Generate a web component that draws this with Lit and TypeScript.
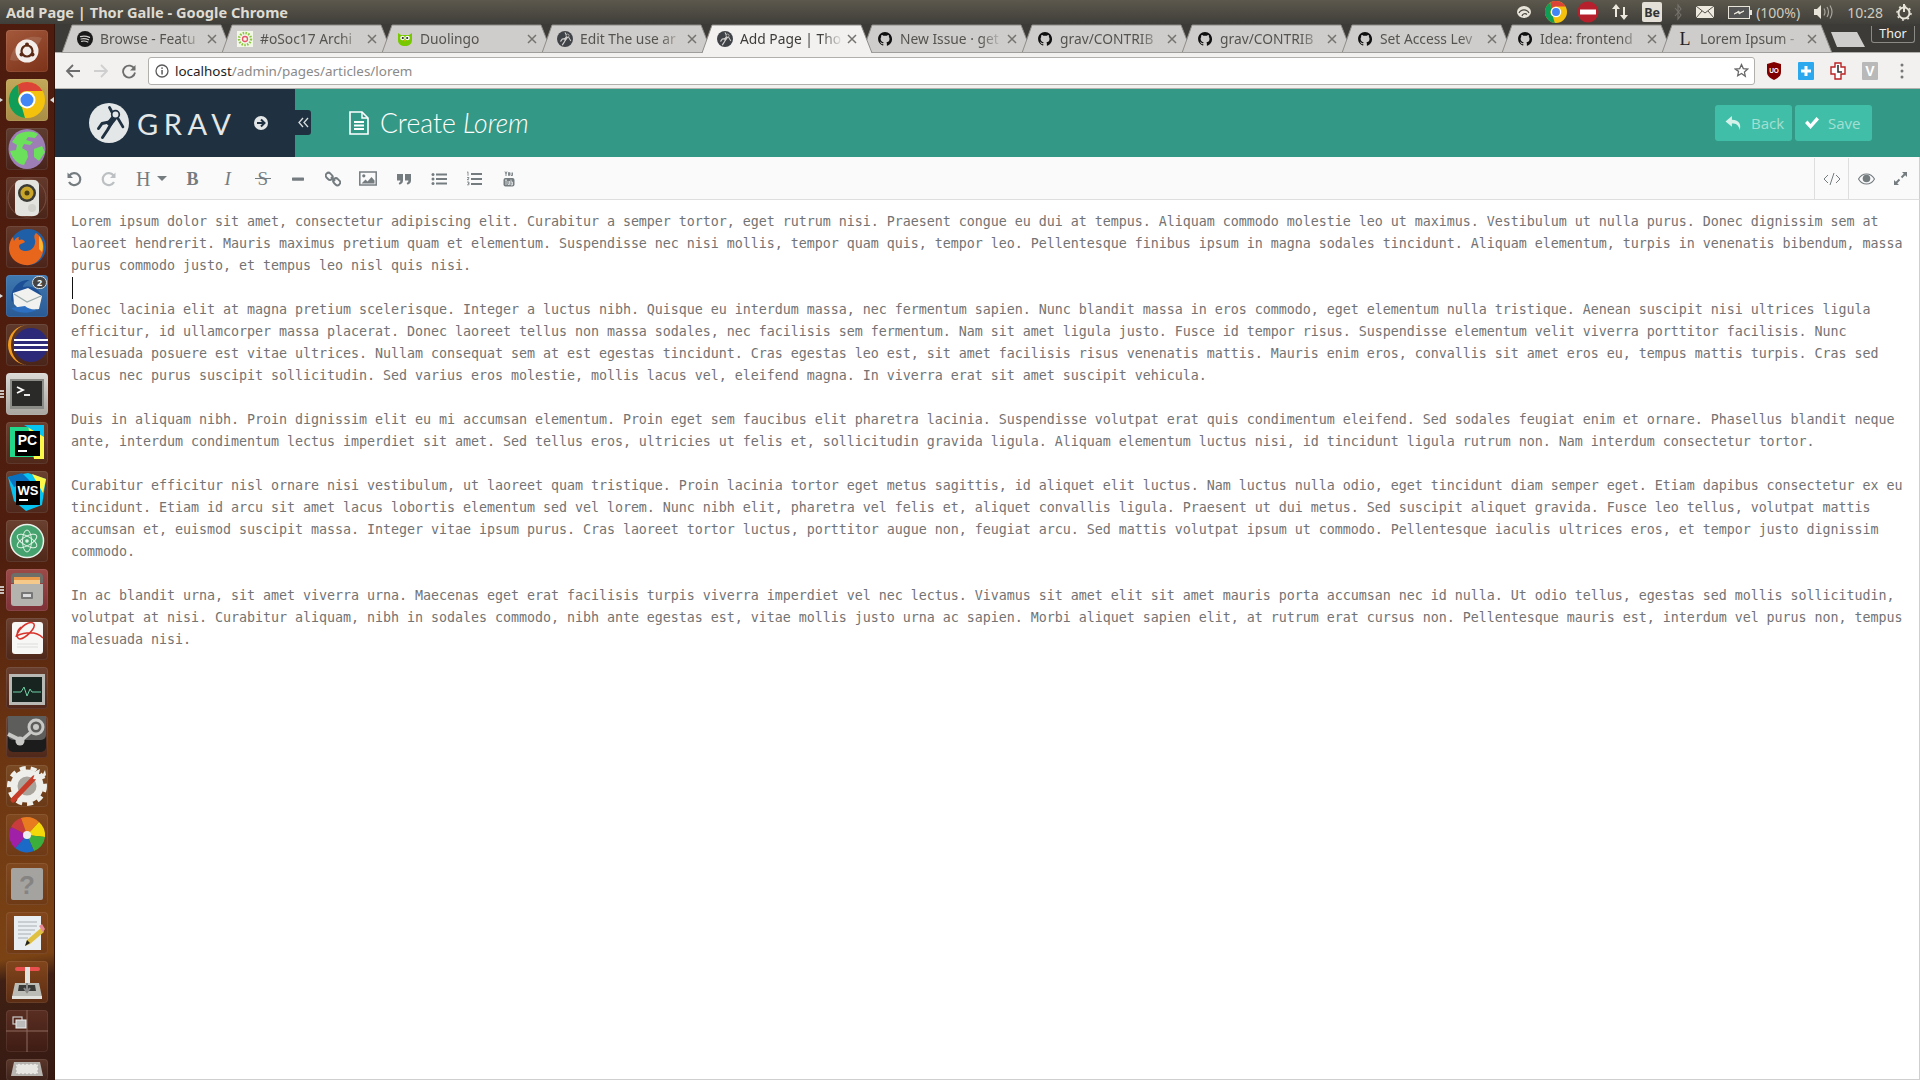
import { LitElement, html, css, svg } from "lit";
import { customElement } from "lit/decorators.js";

const GH = "M12 1.6C6.2 1.6 1.6 6.2 1.6 12c0 4.6 3 8.5 7.1 9.9.5.1.7-.2.7-.5v-1.8c-2.9.6-3.5-1.2-3.5-1.2-.5-1.2-1.2-1.5-1.2-1.5-.9-.6.1-.6.1-.6 1 .1 1.6 1.1 1.6 1.1.9 1.6 2.4 1.1 3 .9.1-.7.4-1.1.7-1.4-2.3-.3-4.7-1.2-4.7-5.1 0-1.1.4-2 1.1-2.8-.1-.3-.5-1.3.1-2.8 0 0 .9-.3 2.9 1.1a10 10 0 0 1 5.2 0c2-1.4 2.9-1.1 2.9-1.1.6 1.5.2 2.5.1 2.8.7.7 1.1 1.7 1.1 2.8 0 4-2.4 4.8-4.7 5.1.4.3.7 1 .7 1.9v2.8c0 .3.2.6.7.5 4.1-1.4 7.1-5.3 7.1-9.9C22.4 6.2 17.8 1.6 12 1.6z";

const gravMark = (size: number, bg: string, fg: string) => html`<svg width=${size} height=${size} viewBox="0 0 40 40">
  <circle cx="20" cy="20" r="20" fill=${bg}></circle>
  <g fill="none" stroke=${fg} stroke-linecap="round" stroke-linejoin="round">
    <path d="M24 11L20.500 4.500" stroke-width="2.800"></path>
    <path d="M29 15.500L34 24" stroke-width="2.600"></path>
    <path d="M25 15l-4 5" stroke-width="6"></path>
    <path d="M20 19l-7 1.500L9.500 25.500" stroke-width="3"></path>
    <path d="M22 21l-3.500 6L13.500 34.500" stroke-width="3"></path>
  </g>
  <circle cx="26.500" cy="11.500" r="3.800" fill=${bg} stroke=${fg} stroke-width="1.700"></circle>
</svg>`;

const fav: Record<string, any> = {
  spotify: html`<svg width="16" height="16" viewBox="0 0 16 16"><circle cx="8" cy="8" r="8" fill="#1a1a1a"></circle><path d="M3.500 5.600c3-.8 6-.6 9 .8M4 8c2.600-.6 5-.4 7.600.8M4.600 10.300c2-.5 4.200-.3 6.200.7" stroke="#cfcdcb" stroke-width="1.200" fill="none" stroke-linecap="round"></path></svg>`,
  osoc: html`<svg width="16" height="16" viewBox="0 0 16 16"><rect width="16" height="16" fill="#f2f7e8"></rect><circle cx="8" cy="8" r="6" fill="none" stroke="#8cc63f" stroke-width="2.400" stroke-dasharray="1.500 1.300"></circle><circle cx="8" cy="8" r="2.500" fill="none" stroke="#e8556b" stroke-width="1.300"></circle></svg>`,
  duo: html`<svg width="16" height="16" viewBox="0 0 16 16"><path d="M1 2l3 2h8l3-2v7c0 4-3 6-7 6s-7-2-7-6z" fill="#78c800"></path><circle cx="5.500" cy="7" r="2.300" fill="#fff"></circle><circle cx="10.500" cy="7" r="2.300" fill="#fff"></circle><circle cx="5.800" cy="7" r="1.100" fill="#222"></circle><circle cx="10.200" cy="7" r="1.100" fill="#222"></circle><path d="M7 9h2l-1 1.800z" fill="#f5a800"></path></svg>`,
  grav: gravMark(16, "#3f4347", "#cfcdcb"),
  gh: html`<svg width="16" height="16" viewBox="0 0 24 24"><path d=${GH} fill="#111"></path></svg>`,
  lipsum: html`<svg width="16" height="16" viewBox="0 0 16 16"><text x="8" y="14" font-family="Liberation Serif, serif" font-size="18" text-anchor="middle" fill="#222">L</text></svg>`,
};

const tabs = [
  ["spotify", "Browse - Featu"],
  ["osoc", "#oSoc17 Archi"],
  ["duo", "Duolingo"],
  ["grav", "Edit The use ar"],
  ["grav", "Add Page | Tho", true],
  ["gh", "New Issue · get"],
  ["gh", "grav/CONTRIB"],
  ["gh", "grav/CONTRIB"],
  ["gh", "Set Access Lev"],
  ["gh", "Idea: frontend"],
  ["lipsum", "Lorem Ipsum -"],
] as [string, string, boolean?][];

const ic = (body: any, w = 42, h = 42) => html`<svg width=${w} height=${h} viewBox="0 0 ${w} ${h}">${body}</svg>`;

const chromeLogo = (r: number, cx: number, cy: number) => {
  const s = r / 18;
  return svg`<g transform="translate(${cx} ${cy}) scale(${s})">
    <circle r="18" fill="#f4c20d"></circle>
    <path d="M0-18A18 18 0 0 1 15.600-9H0a9 9 0 0 0-8 5L-9-15.600A18 18 0 0 1 0-18z" fill="#db4437"></path>
    <path d="M-9-15.600L-8-4a9 9 0 0 0 3 11.500L-2 18A18 18 0 0 1-9-15.600z" fill="#0f9d58"></path>
    <circle r="8.500" fill="#fff"></circle><circle r="6.500" fill="#4285f4"></circle></g>`;
};

const dock: { bg: string; icon: any; pipL?: number; pipR?: boolean; badge?: string }[] = [
  { bg: "linear-gradient(150deg,#a4593c,#7b3218)", icon: ic(svg`<path d="M4 30C8 10 24 4 36 8c-6 12-18 26-32 22z" fill="#fff" opacity=".13"></path><circle cx="21" cy="21" r="11.500" fill="#f4eeea"></circle><circle cx="21" cy="21" r="5.500" fill="none" stroke="#5a2a14" stroke-width="2.200"></circle><circle cx="21" cy="14.500" r="2" fill="#5a2a14"></circle><circle cx="15.500" cy="24.500" r="2" fill="#5a2a14"></circle><circle cx="26.500" cy="24.500" r="2" fill="#5a2a14"></circle>`) },
  { bg: "linear-gradient(#c2a85a,#a98d45)", pipL: 1, pipR: true, icon: ic(chromeLogo(18, 21, 21)) },
  { bg: "linear-gradient(#5f3c30,#48231a)", icon: ic(svg`<ellipse cx="21" cy="21" rx="18.500" ry="20" fill="#9d7fb5"></ellipse><path d="M11 7c6-4 15-5 21-1l-3 4-7-1-2 3 7 2-3 3-6-1-2 4 5 3 1 6-4 8c-7-1-12-7-14-14l6-1 1-5-5-3zM28 21l8-3 3 6-6 9-5-4z" fill="#6be05a"></path>`) },
  { bg: "linear-gradient(#63392b,#4b2419)", icon: ic(svg`<circle cx="21" cy="21" r="19" fill="none" stroke="#7a5040" stroke-width="1"></circle><rect x="9" y="3" width="24" height="36" rx="5" fill="#e3e3df"></rect><circle cx="21" cy="16" r="9" fill="#3a3a36"></circle><circle cx="21" cy="16" r="6.500" fill="#c9a62a"></circle><circle cx="21" cy="16" r="2.500" fill="#4a3e12"></circle><circle cx="26" cy="31" r="4" fill="#d2d2cd"></circle>`) },
  { bg: "linear-gradient(#63392b,#4b2419)", icon: ic(svg`<circle cx="22" cy="21" r="18" fill="#1f5fa8"></circle><path d="M30 7c6 4 9 11 7 19-2 9-10 14-18 13C10 38 3 31 3 22c0-5 2-9 4-11l1 4c1-2 3-4 5-4-1 2 0 3 1 3 2-1 4 0 5 2-2 2-5 1-6 4 0 3 3 5 7 5 6 0 10-5 9-11-1-3-1-5 1-7z" fill="#e8651c"></path><path d="M33 10c4 5 5 11 3 16l-3-3z" fill="#f6b731"></path>`) },
  { bg: "linear-gradient(#3f78b0,#2a5a94)", pipL: 1, badge: "2", icon: ic(svg`<path d="M6 27C3 15 12 4 24 5c-5 2-7 5-7 7 8-2 16 1 19 10-5-3-13-4-20-1z" fill="#1c4f96"></path><path d="M7 18l15-5 14 8-3 13-17 3-8-8z" fill="#f1f1ef"></path><path d="M8 19l13 8 14-6" fill="none" stroke="#9aa" stroke-width="1.200"></path><path d="M5 33c5 5 18 7 27 1-4 1-10 0-13-3z" fill="#2d6fc0"></path>`) },
  { bg: "linear-gradient(#5f3a2c,#4a2419)", icon: ic(svg`<path d="M22 1A20 20 0 1 0 22 41 17 20 0 0 1 22 1z" fill="#f19a1c"></path><circle cx="25" cy="21" r="17" fill="#2c2a78"></circle><path d="M8 16h34M8 21h34M8 26h34" stroke="#fff" stroke-width="2.200"></path>`) },
  { bg: "linear-gradient(#dcdad6,#a9a6a0)", pipL: 3, icon: ic(svg`<rect x="4" y="6" width="34" height="30" fill="#8a8a86"></rect><rect x="6" y="8" width="30" height="25" fill="#2a2a28"></rect><path d="M11 14l6 3-6 3" fill="none" stroke="#fff" stroke-width="1.800"></path><path d="M18 22h6" stroke="#fff" stroke-width="1.800"></path>`) },
  { bg: "linear-gradient(#6a4030,#4f281b)", icon: ic(svg`<path d="M4 5h22l12-2v32H4z" fill="#21d789"></path><path d="M22 3h16v34H28z" fill="#fcf84a"></path><path d="M18 3h20v12z" fill="#07c3f2"></path><rect x="9" y="9" width="25" height="25" fill="#000"></rect><text x="21.500" y="23" font-family="Liberation Sans,sans-serif" font-weight="700" font-size="14" fill="#fff" text-anchor="middle">PC</text><rect x="12" y="28" width="9" height="2" fill="#fff"></rect>`) },
  { bg: "linear-gradient(#6a4030,#4f281b)", icon: ic(svg`<path d="M2 6l20-4 18 6-4 26-16 6-12-10z" fill="#07c3f2"></path><path d="M2 6l14-4 8 8-16 6z" fill="#0a70c0"></path><path d="M26 3l14 5-3 14z" fill="#fcf84a"></path><rect x="10" y="10" width="24" height="24" fill="#000"></rect><text x="22" y="24" font-family="Liberation Sans,sans-serif" font-weight="700" font-size="13" fill="#fff" text-anchor="middle">WS</text><rect x="13" y="28" width="9" height="2" fill="#fff"></rect>`) },
  { bg: "linear-gradient(#6a4030,#4f281b)", icon: ic(svg`<circle cx="21" cy="21" r="16.500" fill="#46a36f" stroke="#e8f2ea" stroke-width="1.500"></circle><g fill="none" stroke="#dff2e4" stroke-width="1"><ellipse cx="21" cy="21" rx="11" ry="4.500" transform="rotate(30 21 21)"></ellipse><ellipse cx="21" cy="21" rx="11" ry="4.500" transform="rotate(-30 21 21)"></ellipse><ellipse cx="21" cy="21" rx="11" ry="4.500" transform="rotate(90 21 21)"></ellipse></g><circle cx="21" cy="21" r="1.800" fill="#dff2e4"></circle>`) },
  { bg: "linear-gradient(#9c4a48,#7d3238)", pipL: 3, icon: ic(svg`<path d="M5 8q0-4 4-4h24q4 0 4 4v6H5z" fill="#6e6e68"></path><path d="M8 8h26v7H8z" fill="#e89a4a"></path><path d="M8 11h26v4H8z" fill="#f4c98a"></path><path d="M5 15h32v19q0 3-3 3H8q-3 0-3-3z" fill="#b4b3ae"></path><rect x="15" y="23" width="12" height="7" rx="1" fill="#777"></rect><rect x="17" y="25" width="8" height="3" fill="#ddd"></rect>`) },
  { bg: "linear-gradient(#6a4030,#4f281b)", icon: ic(svg`<rect x="6" y="4" width="31" height="32" rx="3" fill="#f7f7f5"></rect><path d="M10 19C14 7 25 2 28 6c2 4-8 14-14 15-4 0-4-8 1-12M10 18c10-4 20-5 27 2" fill="none" stroke="#d8342c" stroke-width="1.500"></path><path d="M11 26h21M11 29h21" stroke="#ddd" stroke-width="1.200"></path>`) },
  { bg: "linear-gradient(#6a4030,#4f281b)", icon: ic(svg`<rect x="3" y="7" width="36" height="31" fill="#b8b8b4"></rect><rect x="6" y="10" width="30" height="25" fill="#18241f"></rect><path d="M7 25h8l3-5 3 9 3-7 2 3h9" fill="none" stroke="#6fd0a8" stroke-width="1"></path>`) },
  { bg: "linear-gradient(#6a4030,#4f281b)", icon: ic(svg`<rect x="2" y="-8" width="38" height="44" rx="5" fill="#1c1c1c"></rect><rect x="2" y="-8" width="38" height="32" rx="5" fill="#5d5d5b"></rect><circle cx="30" cy="11" r="7" fill="none" stroke="#c8c8c6" stroke-width="3"></circle><circle cx="30" cy="11" r="3" fill="#c8c8c6"></circle><path d="M2 18l12 6" stroke="#c8c8c6" stroke-width="4"></path><circle cx="14" cy="25" r="4.500" fill="#c8c8c6"></circle><path d="M17 23l8-7" stroke="#c8c8c6" stroke-width="3"></path>`) },
  { bg: "linear-gradient(#7a4a24,#6a3a18)", icon: ic(svg`<circle cx="21" cy="21" r="13" fill="#a9a49b" stroke="#eeeeea" stroke-width="7"></circle><circle cx="21" cy="21" r="18" fill="none" stroke="#eeeeea" stroke-width="4" stroke-dasharray="6 5"></circle><path d="M7 35L28 13" stroke="#c63c28" stroke-width="5" stroke-linecap="round"></path><path d="M27 14l3-8 4-2-1 5 4 0 2-4 1 5-5 5z" fill="#eeeeea"></path>`) },
  { bg: "linear-gradient(#80481e,#6e3a16)", icon: ic(svg`<path d="M21 21L15 4A18 18 0 0 0 5 13z" fill="#c83c3c"></path><path d="M21 21L15 4A18 18 0 0 1 33 8z" fill="#e87a20"></path><path d="M21 21L33 8A18 18 0 0 1 39 23z" fill="#f4d90a"></path><path d="M21 21L39 23A18 18 0 0 1 28 37z" fill="#3cae3c"></path><path d="M21 21L28 37A18 18 0 0 1 9 34z" fill="#1c6ac8"></path><path d="M21 21L9 34A18 18 0 0 1 5 13z" fill="#a020a8"></path><circle cx="21" cy="21" r="4" fill="#eee"></circle>`) },
  { bg: "linear-gradient(#80481e,#6e3a16)", icon: ic(svg`<rect x="5" y="5" width="32" height="32" rx="2" fill="#a5a3a0"></rect><text x="21" y="31" font-family="Liberation Sans,sans-serif" font-weight="700" font-size="26" fill="#868482" text-anchor="middle">?</text>`) },
  { bg: "linear-gradient(#82461c,#703a16)", icon: ic(svg`<rect x="8" y="4" width="27" height="34" fill="#e9eef2"></rect><path d="M12 10h19M12 14h19M12 18h17M12 22h13M12 26h10" stroke="#a8aeb2" stroke-width="1"></path><path d="M19 34l2-6 14-12 3 4-14 12z" fill="#e0c040"></path><path d="M33 14l3-2 3 5-2 3z" fill="#e88a9a"></path><path d="M19 34l2-6 3 3z" fill="#222"></path>`) },
  { bg: "linear-gradient(#82461c,#5c2d14)", icon: ic(svg`<rect x="9" y="6" width="25" height="4" rx="2" fill="#e85050"></rect><rect x="19" y="6" width="5" height="20" fill="#e2e2de"></rect><path d="M6 36l3-14h24l3 14z" fill="#bcbcb6"></path><path d="M13 24h16l1 6H12z" fill="#3a3a38"></path><path d="M21 22v8M18 27l3 4 3-4" stroke="#888" stroke-width="2" fill="none"></path><rect x="6" y="35" width="30" height="3" fill="#e2e2de"></rect>`) },
  { bg: "linear-gradient(#5a2e22,#3e1c14)", icon: ic(svg`<path d="M21 0v42M0 21h42" stroke="#8e6a5e" stroke-width="1"></path><rect x="7" y="7" width="9" height="7" fill="none" stroke="#ccc" stroke-width="1.200"></rect><rect x="10" y="10" width="10" height="8" fill="#bbb" stroke="#eee" stroke-width="1"></rect>`) },
  { bg: "linear-gradient(#5a362a,#3e241c)", icon: ic(svg`<path d="M8 3h26l3 14H5z" fill="#b9b5b0"></path><path d="M10 5h22v10H10z" fill="#e8e6e2" stroke-dasharray="2 2" stroke="#aaa"></path>`, 42, 22) },
];

const P = (w: number, h: number, body: any) => html`<svg width=${w} height=${h} viewBox="0 0 ${w} ${h}">${body}</svg>`;

const tool: Record<string, any> = {
  undo: P(16, 16, svg`<path d="M3.500 4.500A6 6 0 1 1 3 11" fill="none" stroke="currentColor" stroke-width="2.200"></path><path d="M1.500 1.500v5.500h5.500z" fill="currentColor"></path>`),
  redo: P(16, 16, svg`<path d="M12.500 4.500A6 6 0 1 0 13 11" fill="none" stroke="currentColor" stroke-width="2.200"></path><path d="M14.500 1.500v5.500h-5.500z" fill="currentColor"></path>`),
  minus: P(14, 16, svg`<rect x="1" y="6.500" width="12" height="3.200" rx=".6" fill="currentColor"></rect>`),
  link: P(16, 16, svg`<g fill="none" stroke="currentColor" stroke-width="1.900"><rect x=".5" y="2.500" width="7.500" height="5.500" rx="2.700" transform="rotate(45 4.200 5.200)"></rect><rect x="8" y="8" width="7.500" height="5.500" rx="2.700" transform="rotate(45 11.700 10.700)"></rect><path d="M6 6l4 4"></path></g>`),
  image: P(18, 15, svg`<rect x=".8" y="1" width="16.400" height="13" fill="none" stroke="currentColor" stroke-width="1.500"></rect><circle cx="4.800" cy="4.800" r="1.600" fill="currentColor"></circle><path d="M2.500 12.500l4-4 2 2 4-4.500 3 3.500v3z" fill="currentColor"></path>`),
  quote: P(16, 16, svg`<path d="M1 3h6v6.500c0 2.500-1.600 3.800-3.800 4l-.5-1.600c1.200-.3 1.700-1 1.700-2.400H1zM9 3h6v6.500c0 2.500-1.600 3.800-3.800 4l-.5-1.600c1.200-.3 1.700-1 1.700-2.400H9z" fill="currentColor"></path>`),
  ul: P(16, 14, svg`<circle cx="2" cy="2.500" r="1.500" fill="currentColor"></circle><circle cx="2" cy="7" r="1.500" fill="currentColor"></circle><circle cx="2" cy="11.500" r="1.500" fill="currentColor"></circle><path d="M5 2.500h11M5 7h11M5 11.500h11" stroke="currentColor" stroke-width="2"></path>`),
  ol: P(16, 16, svg`<path d="M1 1.500l1-.7v4M1 6.500h2v.8l-2 1.400h2M1 11h2v1.300H2h1v1.500H1" fill="none" stroke="currentColor" stroke-width=".8"></path><path d="M5 3h11M5 8h11M5 13h11" stroke="currentColor" stroke-width="2"></path>`),
  yt: P(12, 16, svg`<path d="M2 .5l1 2.500 1-2.500M3 3v2M5.500 1.500h1v3h-1zM8 1.500v3h1.500v-3" fill="none" stroke="currentColor" stroke-width=".9"></path><rect x=".5" y="7" width="11" height="8.500" rx="2" fill="currentColor"></rect><path d="M2 9h2M3 9v5M5 10v3.500h1.500V10M8 8.500V14h1.500v-3H8" stroke="#fafafa" stroke-width=".7" fill="none"></path>`),
  code: P(18, 14, svg`<path d="M5 3L1 7l4 4M13 3l4 4-4 4M11 1L7 13" fill="none" stroke="currentColor" stroke-width="1"></path>`),
  eye: P(17, 12, svg`<path d="M.5 6C2.500 2.500 5.500 1 8.500 1s6 1.500 8 5c-2 3.500-5 5-8 5s-6-1.500-8-5z" fill="none" stroke="currentColor" stroke-width="1.100"></path><circle cx="8.500" cy="5.500" r="3.800" fill="currentColor"></circle>`),
  expand: P(15, 15, svg`<path d="M9 1h5v5l-1.800-1.800-3 3L7.800 5.800l3-3zM6 14H1V9l1.800 1.800 3-3 1.400 1.400-3 3z" fill="currentColor"></path>`),
};

const paragraphs = [
  "Lorem ipsum dolor sit amet, consectetur adipiscing elit. Curabitur a semper tortor, eget rutrum nisi. Praesent congue eu dui at tempus. Aliquam commodo molestie leo ut maximus. Vestibulum ut nulla purus. Donec dignissim sem at laoreet hendrerit. Mauris maximus pretium quam et elementum. Suspendisse nec nisi mollis, tempor quam quis, tempor leo. Pellentesque finibus ipsum in magna sodales tincidunt. Aliquam elementum, turpis in venenatis bibendum, massa purus commodo justo, et tempus leo nisl quis nisi.",
  "Donec lacinia elit at magna pretium scelerisque. Integer a luctus nibh. Quisque eu interdum massa, nec fermentum sapien. Nunc blandit massa in eros commodo, eget elementum nulla tristique. Aenean suscipit nisi ultrices ligula efficitur, id ullamcorper massa placerat. Donec laoreet tellus non massa sodales, nec facilisis sem fermentum. Nam sit amet ligula justo. Fusce id tempor risus. Suspendisse elementum velit viverra porttitor facilisis. Nunc malesuada posuere est vitae ultrices. Nullam consequat sem at est egestas tincidunt. Cras egestas leo est, sit amet facilisis risus venenatis mattis. Mauris enim eros, convallis sit amet eros eu, tempus mattis turpis. Cras sed lacus nec purus suscipit sollicitudin. Sed varius eros molestie, mollis lacus vel, eleifend magna. In viverra erat sit amet suscipit vehicula.",
  "Duis in aliquam nibh. Proin dignissim elit eu mi accumsan elementum. Proin eget sem faucibus elit pharetra lacinia. Suspendisse volutpat erat quis condimentum eleifend. Sed sodales feugiat enim et ornare. Phasellus blandit neque ante, interdum condimentum lectus imperdiet sit amet. Sed tellus eros, ultricies ut felis et, sollicitudin gravida ligula. Aliquam elementum luctus nisi, id tincidunt ligula rutrum non. Nam interdum consectetur tortor.",
  "Curabitur efficitur nisl ornare nisi vestibulum, ut laoreet quam tristique. Proin lacinia tortor eget metus sagittis, id aliquet elit luctus. Nam luctus nulla odio, eget tincidunt diam semper eget. Etiam dapibus consectetur ex eu tincidunt. Etiam id arcu sit amet lacus lobortis elementum sed vel lorem. Nunc nibh elit, pharetra vel felis et, aliquet convallis ligula. Praesent ut dui metus. Sed suscipit aliquet gravida. Fusce leo tellus, volutpat mattis accumsan et, euismod suscipit massa. Integer vitae ipsum purus. Cras laoreet tortor luctus, porttitor augue non, feugiat arcu. Sed mattis volutpat ipsum ut commodo. Pellentesque iaculis ultrices eros, et tempor justo dignissim commodo.",
  "In ac blandit urna, sit amet viverra urna. Maecenas eget erat facilisis turpis viverra imperdiet vel nec lectus. Vivamus sit amet elit sit amet mauris porta accumsan nec id nulla. Ut odio tellus, egestas sed mollis sollicitudin, volutpat at nisi. Curabitur aliquam, nibh in sodales commodo, nibh ante egestas est, vitae mollis justo urna ac sapien. Morbi aliquet sapien elit, at rutrum erat cursus non. Pellentesque mauris est, interdum vel purus non, tempus malesuada nisi.",
];

@customElement("app-root")
export class AppRoot extends LitElement {
  static styles = css`
    :host { display: block; width: 1920px; height: 1080px; overflow: hidden; font-family: "Noto Sans", sans-serif; background: #fff; }
    * { box-sizing: border-box; }
    svg { display: block; flex: none; }
    .panel { height: 24px; display: flex; align-items: center; background: linear-gradient(#5c584d, #3f3e39); color: #dfdbd2; }
    .wintitle { font: 700 14.6px/22px "Noto Sans", sans-serif; padding-left: 6px; flex: 1; white-space: nowrap; }
    .tray { display: flex; align-items: center; height: 24px; padding-right: 8px; }
    .tray > * { flex: none; }
    .traytext { font: 400 14px "Noto Sans", sans-serif; color: #cfcbbf; white-space: nowrap; }
    .be { width: 20px; height: 20px; background: #e4e0d8; color: #333; font: 700 12.5px "Noto Sans", sans-serif; display: flex; align-items: center; justify-content: center; border-radius: 2px; }
    .g13 { margin-right: 13px; } .g14 { margin-right: 14px; } .g12 { margin-right: 12px; } .g10 { margin-right: 10px; } .g4 { margin-right: 4px; }

    .body { display: flex; height: 1056px; }
    .dock { width: 55px; flex: none; padding: 6px 0 0 6px; display: flex; flex-direction: column; gap: 7px; overflow: hidden;
      background: linear-gradient(172deg, #4d1c0e 0%, #4f1e0e 50%, #6b3512 68%, #7b4314 88%, #402014 90%, #361a12 100%);
      border-right: 1px solid #33140a; }
    .tile { width: 42px; height: 42px; flex: none; border-radius: 4px; position: relative; box-shadow: inset 0 0 0 1px rgba(255,255,255,.08); }
    .tile.last { height: 22px; }
    .pipl { position: absolute; left: -6px; top: 50%; display: flex; flex-direction: column; gap: 1px; transform: translateY(-50%); }
    .pipl i { display: block; width: 0; height: 0; border-left: 3px solid #ddd; border-top: 2px solid transparent; border-bottom: 2px solid transparent; }
    .pipl.many i { border: 0; width: 4px; height: 2px; background: #c9c0bb; }
    .pipr { position: absolute; right: -6px; top: 50%; transform: translateY(-50%); width: 0; height: 0; border-right: 4px solid #ddd; border-top: 3px solid transparent; border-bottom: 3px solid transparent; }
    .badge { position: absolute; right: 1px; top: 1px; width: 15px; height: 13px; border-radius: 7px; background: #444; border: 1.5px solid #ddd; color: #fff; font: 700 9px "Noto Sans", sans-serif; display: flex; align-items: center; justify-content: center; }

    .main { flex: 1; min-width: 0; display: flex; flex-direction: column; }
    .tabs { height: 28px; background: #3c3b37; display: flex; padding-left: 6px; position: relative; flex: none; }
    .tab { width: 172px; height: 29px; margin-right: -12px; position: relative; flex: none; display: flex; align-items: center; padding: 0 0 0 16px; }
    .tabshape { position: absolute; left: 0; top: 0; }
    .tab.on { z-index: 2; }
    .fav { position: relative; width: 16px; height: 16px; margin-right: 7px; }
    .tablabel { position: relative; width: 103px; overflow: hidden; white-space: nowrap; font: 400 13.8px "Noto Sans", sans-serif; color: #55534f;
      -webkit-mask-image: linear-gradient(90deg, #000 78%, transparent 100%); mask-image: linear-gradient(90deg, #000 78%, transparent 100%); }
    .tab.on .tablabel { color: #3c3b37; }
    .close { position: relative; margin-left: 4px; width: 10px; height: 10px; }
    .newtab { width: 34px; height: 15px; margin: 8px 0 0 10px; flex: none; }
    .user { position: absolute; right: 5px; top: 2px; width: 44px; height: 17px; background: #3a3936; border: 1px solid #8c8a85; border-top: 0; border-radius: 0 0 3px 3px; color: #f2f1ee; font: 400 12.5px "Noto Sans", sans-serif; text-align: center; line-height: 15px; }

    .chrome { height: 37px; background: #f2f1f0; border-bottom: 1px solid #b4b2ae; border-top: 1px solid #b0aeaa; display: flex; align-items: center; padding-left: 4px; flex: none; }
    .nav { width: 28px; display: flex; justify-content: center; }
    .omni { margin: 0 3px 0 5px; width: 1607px; height: 28px; background: #fff; border: 1px solid #b2b0ac; border-radius: 3px; display: flex; align-items: center; padding: 0 5px 0 6px; }
    .url { margin-left: 6px; flex: 1; font: 400 13.45px "Noto Sans", sans-serif; color: #8a8a8a; white-space: nowrap; }
    .url b { font-weight: 400; color: #222; }
    .ext { width: 32px; display: flex; justify-content: center; flex: none; }
    .extv { width: 16px; height: 18px; background: #b9b9b9; color: #fff; font: 700 14px "Liberation Sans", sans-serif; display: flex; align-items: center; justify-content: center; border-radius: 1px; }

    .head { height: 68px; display: flex; align-items: center; background: #349886; flex: none; position: relative; }
    .brand { width: 240px; height: 68px; background: #1f3140; display: flex; align-items: center; padding-left: 34px; flex: none; }
    .gravword { margin-left: 8px; width: 110px; font: 400 29px "Lato", sans-serif; letter-spacing: 5.6px; color: #e4e7e8; line-height: 1; white-space: nowrap; }
    .go { margin-left: 7px; }
    .collapse { position: absolute; left: 240px; top: 21px; width: 16px; height: 25px; background: #1f3140; border-radius: 0 3px 3px 0; display: flex; align-items: center; justify-content: center; }
    .doc { margin-left: 54px; }
    .title { margin-left: 11px; font: 300 26.5px "Lato", sans-serif; color: #fff; white-space: nowrap; flex: 1; }
    .title em { font-style: italic; }
    .btn { width: 77px; height: 36px; background: #41bea8; border-radius: 3px; display: flex; align-items: center; gap: 8px; padding-left: 9px; color: #a3e0d3; font: 400 15px "Open Sans", sans-serif; margin-left: 3px; flex: none; }
    .btns { display: flex; margin-right: 48px; }

    .bar { height: 43px; background: #fafafa; border-bottom: 1px solid #dedede; border-right: 1px solid #cfcfcf; display: flex; padding: 1px 1px 0 1.5px; color: #747c80; flex: none; }
    .cell { width: 35.2px; height: 41px; display: flex; align-items: center; justify-content: center; flex: none; }
    .cell.dim { color: #bcc0c2; }
    .cell.h { width: 48px; gap: 7px; justify-content: flex-start; padding-left: 9px; }
    .glyph { font: 700 18px "Liberation Serif", serif; line-height: 1; position: relative; }
    .glyph.n { font-weight: 400; font-size: 20px; }
    .glyph.i { font-style: italic; font-weight: 400; font-size: 19px; }
    .glyph.s { font-weight: 400; font-size: 19px; }
    .glyph.s::after { content: ""; position: absolute; left: -3px; right: -3px; top: 9px; height: 1px; background: currentColor; }
    .caret { width: 0; height: 0; border-top: 5px solid currentColor; border-left: 5px solid transparent; border-right: 5px solid transparent; }
    .spacer { flex: 1; }
    .cell.sep { border-left: 1px solid #dedede; width: 34px; }
    .cell.r { width: 35px; }

    .text { flex: 1; padding: 11px 9px 0 16px; font: 400 13.33px/22px "DejaVu Sans Mono", monospace; letter-spacing: -0.026px; color: #737373; overflow: hidden; border-right: 1px solid #cfcfcf; border-bottom: 1px solid #cfcfcf; }
    .text p { margin: 0 0 22px; }
    .text p.first { margin: 0; }
    .cursor { height: 22px; width: 1px; background: #111; margin-left: 1px; }
  `;

  tray() {
    return html`<div class="tray">
      <svg class="g14" width="14" height="12" viewBox="0 0 14 12"><ellipse cx="7" cy="6" rx="7" ry="6" fill="#e8e4da"></ellipse><path d="M2 7a5.500 5.500 0 0 1 10 0M5 10a3 3 0 0 1 5-1.500" fill="none" stroke="#4a4840" stroke-width="1.200"></path></svg>
      <svg class="g10" width="22" height="22" viewBox="0 0 24 24">${chromeLogo(12, 12, 12)}</svg>
      <svg class="g12" width="22" height="22" viewBox="0 0 22 22"><circle cx="11" cy="11" r="10.500" fill="#b5202c"></circle><rect x="3" y="8.500" width="16" height="5" fill="#fff"></rect></svg>
      <svg class="g13" width="18" height="18" viewBox="0 0 18 18"><path d="M5 1L1 6h3v8h2V6h3zM13 17l4-5h-3V4h-2v8H9z" fill="#ece8de"></path></svg>
      <div class="be g12">Be</div>
      <svg class="g14" width="8" height="18" viewBox="0 0 8 18"><path d="M1 5l6 7-3 4V2l3 4-6 7" fill="none" stroke="#75736c" stroke-width="1.100"></path></svg>
      <svg class="g14" width="18" height="12" viewBox="0 0 18 12"><rect width="18" height="12" fill="#eee9df" rx="1"></rect><path d="M0 0l9 7 9-7M0 12l6-7M18 12l-6-7" fill="none" stroke="#55534c" stroke-width="1"></path></svg>
      <svg class="g4" width="24" height="13" viewBox="0 0 24 13"><rect x=".5" y=".5" width="21" height="12" fill="#555" stroke="#e8e4da"></rect><rect x="22" y="4" width="2" height="5" fill="#e8e4da"></rect><path d="M6 8l5-2v2l5-3-5 2V5z" fill="#e8e4da" stroke="#e8e4da"></path></svg>
      <span class="traytext g13">(100%)</span>
      <svg class="g14" width="20" height="16" viewBox="0 0 20 16"><path d="M1 5h3l4-4v14l-4-4H1z" fill="#e8e4da"></path><path d="M11 4.500q2 3.500 0 7M14 3q3 5 0 10M17 1.500q4 6.500 0 13" fill="none" stroke="#a8a59c" stroke-width="1.200"></path></svg>
      <span class="traytext g13">10:28</span>
      <svg width="16" height="18" viewBox="0 0 16 18"><circle cx="8" cy="10" r="5.500" fill="none" stroke="#e8e4da" stroke-width="2"></circle><circle cx="8" cy="10" r="7" fill="none" stroke="#e8e4da" stroke-width="1.500" stroke-dasharray="2 3.500"></circle><rect x="7" y="1" width="2" height="8" fill="#e8e4da"></rect></svg>
    </div>`;
  }

  tabShape(on: boolean) {
    const fill = on ? "#f2f1f0" : "#cfcdcb";
    return html`<svg class="tabshape" width="172" height="29" viewBox="0 0 172 29">
      <path d="M1 29L11 1H160L171 29z" fill=${fill}></path>
      <path d="M1 29L11 1H160L171 29" fill="none" stroke="#8e8c88" stroke-width="1"></path>
      ${on ? "" : svg`<path d="M0 28.500H172" stroke="#a09e9a" stroke-width="1"></path>`}
    </svg>`;
  }

  render() {
    return html`
      <div class="panel">
        <div class="wintitle">Add Page | Thor Galle - Google Chrome</div>
        ${this.tray()}
      </div>
      <div class="body">
        <div class="dock">
          ${dock.map((d, i) => html`<div class="tile ${i === dock.length - 1 ? "last" : ""}" style="background:${d.bg}">
            ${d.icon}
            ${d.pipL ? html`<div class="pipl ${d.pipL > 1 ? "many" : ""}">${Array.from({ length: d.pipL }, () => html`<i></i>`)}</div>` : ""}
            ${d.pipR ? html`<div class="pipr"></div>` : ""}
            ${d.badge ? html`<div class="badge">${d.badge}</div>` : ""}
          </div>`)}
        </div>
        <div class="main">
          <div class="tabs">
            ${tabs.map(([f, t, on]) => html`<div class="tab ${on ? "on" : ""}">
              ${this.tabShape(!!on)}
              <div class="fav">${fav[f]}</div>
              <div class="tablabel">${t}</div>
              <svg class="close" viewBox="0 0 10 10"><path d="M1 1l8 8M9 1l-8 8" stroke="#75736f" stroke-width="1.500"></path></svg>
            </div>`)}
            <svg class="newtab" viewBox="0 0 34 15"><path d="M0 0H26L34 15H6z" fill="#cfcdcb"></path></svg>
            <div class="user">Thor</div>
          </div>
          <div class="chrome">
            <div class="nav"><svg width="16" height="16" viewBox="0 0 16 16"><path d="M8 2L2 8l6 6M2 8h13" fill="none" stroke="#6d6d6d" stroke-width="1.800"></path></svg></div>
            <div class="nav"><svg width="16" height="16" viewBox="0 0 16 16"><path d="M8 2l6 6-6 6M14 8H1" fill="none" stroke="#cfcfcf" stroke-width="1.800"></path></svg></div>
            <div class="nav"><svg width="16" height="16" viewBox="0 0 16 16"><path d="M13.500 6A6 6 0 1 0 14 9.500" fill="none" stroke="#6d6d6d" stroke-width="1.800"></path><path d="M14.500 2v5.500H9z" fill="#6d6d6d"></path></svg></div>
            <div class="omni">
              <svg width="14" height="14" viewBox="0 0 14 14"><circle cx="7" cy="7" r="6" fill="none" stroke="#5a5a5a" stroke-width="1.300"></circle><rect x="6.300" y="6" width="1.500" height="4.500" fill="#5a5a5a"></rect><rect x="6.300" y="3.400" width="1.500" height="1.500" fill="#5a5a5a"></rect></svg>
              <div class="url"><b>localhost</b>/admin/pages/articles/lorem</div>
              <svg width="15" height="15" viewBox="0 0 24 24"><path d="M12 2.500l2.900 6.400 7 .8-5.200 4.700 1.400 6.900L12 16.800l-6.100 3.500 1.400-6.900L2.100 9.700l7-.8z" fill="none" stroke="#666" stroke-width="2"></path></svg>
            </div>
            <div class="ext"><svg width="16" height="18" viewBox="0 0 16 18"><path d="M8 0l7 2v8c0 4-3 6-7 8-4-2-7-4-7-8V2z" fill="#800000"></path><text x="8" y="11" font-family="Liberation Sans,sans-serif" font-size="6.500" font-weight="700" fill="#fff" text-anchor="middle">UO</text></svg></div>
            <div class="ext"><svg width="16" height="18" viewBox="0 0 16 18"><rect width="16" height="18" rx="1" fill="#2ba8ee"></rect><path d="M8 4v10M3 9h10" stroke="#fff" stroke-width="3"></path></svg></div>
            <div class="ext"><svg width="16" height="18" viewBox="0 0 16 18"><path d="M5 1h6v4h4v7h-4v5H5v-5H1V5h4z" fill="#fff" stroke="#b22" stroke-width="1.400"></path><path d="M8 3v7h4" fill="none" stroke="#333" stroke-width="1.600"></path></svg></div>
            <div class="ext"><div class="extv">V</div></div>
            <div class="ext"><svg width="4" height="16" viewBox="0 0 4 16"><circle cx="2" cy="2" r="1.500" fill="#777"></circle><circle cx="2" cy="8" r="1.500" fill="#777"></circle><circle cx="2" cy="14" r="1.500" fill="#777"></circle></svg></div>
          </div>
          <div class="head">
            <div class="brand">
              ${gravMark(40, "#e4e7e8", "#1f3140")}
              <div class="gravword">GRAV</div>
              <svg class="go" width="14" height="14" viewBox="0 0 14 14"><circle cx="7" cy="7" r="7" fill="#e4e7e8"></circle><path d="M7 3.500l3.500 3.500L7 10.500M3 7h7" fill="none" stroke="#1f3140" stroke-width="2"></path></svg>
            </div>
            <div class="collapse"><svg width="11" height="11" viewBox="0 0 11 11"><path d="M5 1L1 5.500 5 10M10 1L6 5.500l4 4.500" fill="none" stroke="#d8dcdd" stroke-width="1.300"></path></svg></div>
            <svg class="doc" width="20" height="24" viewBox="0 0 20 24"><path d="M1 1h12l6 6v16H1z" fill="none" stroke="#fff" stroke-width="1.600"></path><path d="M13 1v6h6" fill="none" stroke="#fff" stroke-width="1.400"></path><path d="M5 11h10M5 14.500h10M5 18h10" stroke="#fff" stroke-width="1.800"></path></svg>
            <div class="title">Create <em>Lorem</em></div>
            <div class="btns">
              <div class="btn"><svg width="19" height="17" viewBox="0 0 17 16"><path d="M7 1L1 6l6 5V8c4 0 6 1 7.500 6 1-5 0-9-7.500-9.500z" fill="#d5f1ea"></path></svg>Back</div>
              <div class="btn"><svg width="16" height="14" viewBox="0 0 16 14"><path d="M1 7l2.500-2.500L6.500 8 12.500 1 15 3.500 6.500 13z" fill="#fff"></path></svg>Save</div>
            </div>
          </div>
          <div class="bar">
            <div class="cell">${tool.undo}</div>
            <div class="cell dim">${tool.redo}</div>
            <div class="cell h"><span class="glyph n">H</span><span class="caret"></span></div>
            <div class="cell"><span class="glyph">B</span></div>
            <div class="cell"><span class="glyph i">I</span></div>
            <div class="cell"><span class="glyph s">S</span></div>
            <div class="cell">${tool.minus}</div>
            <div class="cell">${tool.link}</div>
            <div class="cell">${tool.image}</div>
            <div class="cell">${tool.quote}</div>
            <div class="cell">${tool.ul}</div>
            <div class="cell">${tool.ol}</div>
            <div class="cell">${tool.yt}</div>
            <div class="spacer"></div>
            <div class="cell sep">${tool.code}</div>
            <div class="cell sep r">${tool.eye}</div>
            <div class="cell r">${tool.expand}</div>
          </div>
          <div class="text">
            <p class="first">${paragraphs[0]}</p>
            <div class="cursor"></div>
            ${paragraphs.slice(1).map((p) => html`<p>${p}</p>`)}
          </div>
        </div>
      </div>
    `;
  }
}
